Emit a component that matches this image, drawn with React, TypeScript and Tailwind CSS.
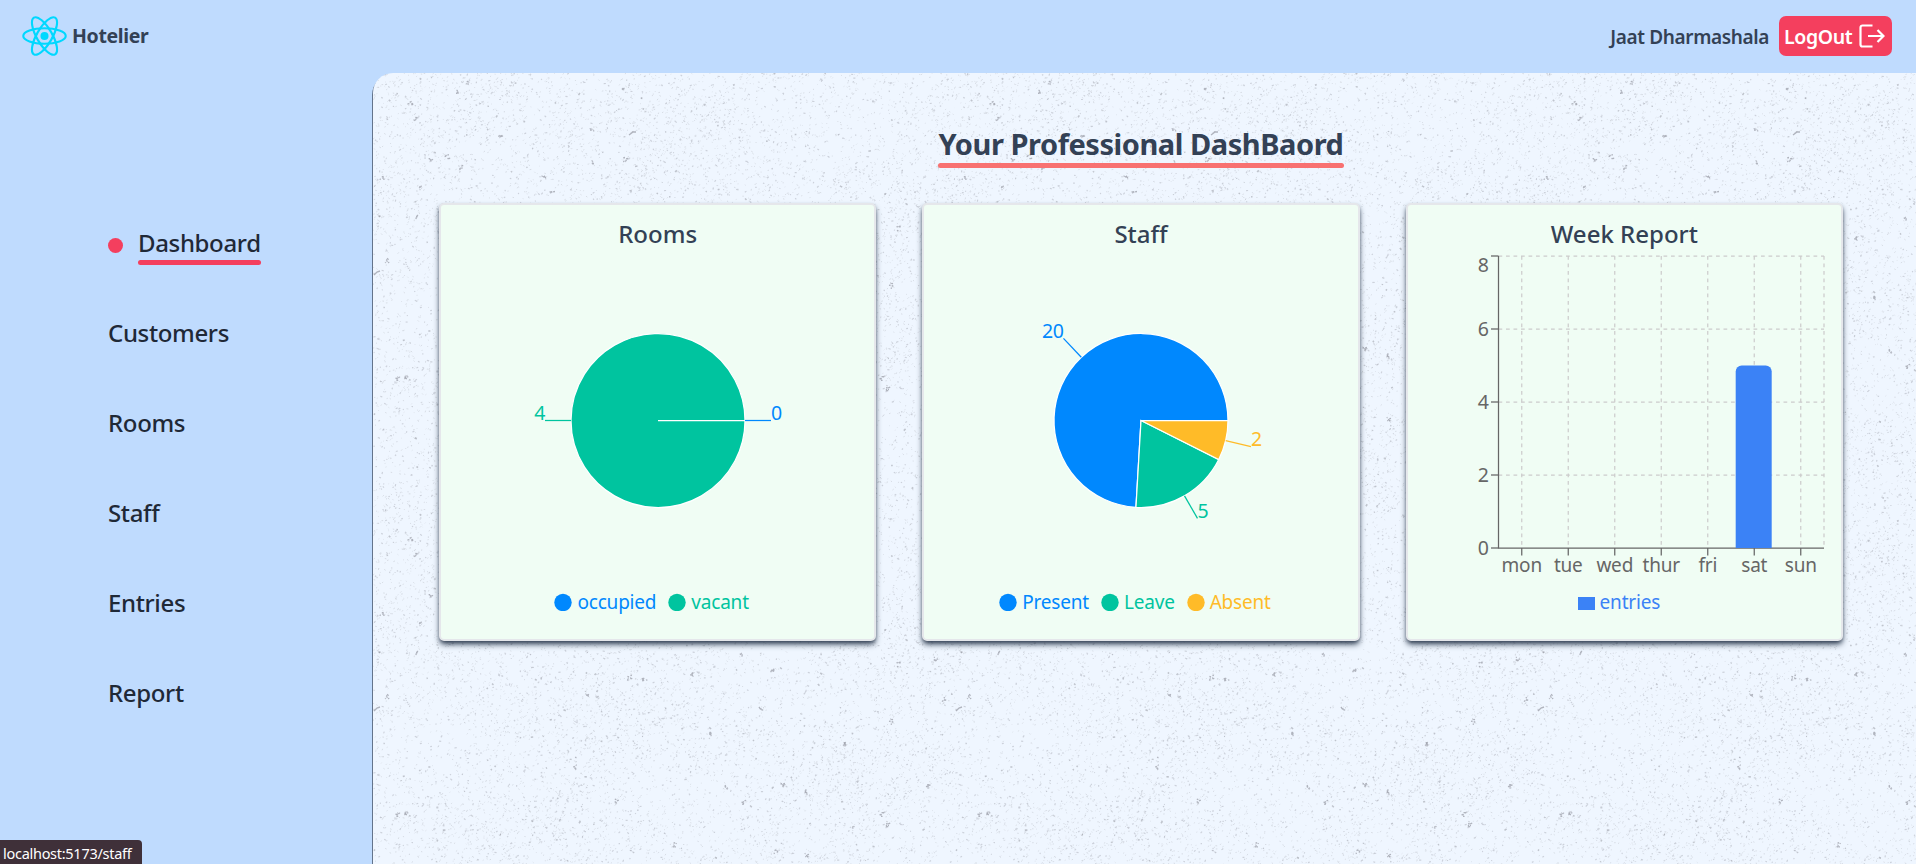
import React from "react";

const FONT = "font-['Noto_Sans','Open_Sans',sans-serif]";
const TILE_W = 582;
const TILE_H = 436;

function random(seed: number) {
  let s = seed;
  return () => {
    s = (s * 1664525 + 1013904223) % 4294967296;
    return s / 4294967296;
  };
}

// Builds one path of short random strokes over the tile, denser in some areas.
function specks(seed: number, count: number, min: number, max: number) {
  const r = random(seed);
  let d = "";
  for (let i = 0; i < count; i++) {
    const x = r() * TILE_W;
    const y = r() * TILE_H;
    const u = (x / TILE_W) * Math.PI * 2;
    const v = (y / TILE_H) * Math.PI * 2;
    const density = 0.62 + 0.12 * Math.sin(2 * u + v) + 0.1 * Math.cos(3 * v - u) + 0.08 * Math.sin(5 * u + 4 * v);
    const len = min + r() * (max - min);
    const a = -0.9 + r() * 2.4;
    if (r() > density) continue;
    d += `M${x.toFixed(1)} ${y.toFixed(1)}l${(Math.cos(a) * len).toFixed(1)} ${(-Math.sin(a) * len).toFixed(1)}`;
  }
  return d;
}

const GRAINS = [
  [43, 46], [127, 64], [219, 58], [251, 16], [252, 87], [48, 115], [14, 188], [171, 105], [87, 95], [74, 84],
  [220, 90], [179, 119], [95, 11], [85, 19], [43, 144], [9, 106], [37, 30], [58, 87], [215, 186], [369, 146],
  [256, 169], [270, 171], [319, 166], [399, 162], [387, 199], [337, 225], [471, 236], [518, 213], [526, 156],
  [563, 150], [571, 191], [24, 306], [515, 317], [509, 306], [371, 294], [354, 278], [302, 336], [403, 343],
  [433, 347], [202, 258], [244, 292], [432, 283], [409, 276], [555, 277], [33, 304],
];

function grains() {
  const r = random(5);
  let d = "M1 202l3 -3l3 -1M256 62l4 -3l3 0";
  for (const [x, y] of GRAINS) {
    for (let i = 0; i < 5; i++) {
      d += `M${(x - 2.5 + r() * 4).toFixed(1)} ${(y - 2.5 + r() * 4.5).toFixed(1)}l${(0.6 + r() * 1.4).toFixed(1)} ${(-1 + r() * 1.6).toFixed(1)}`;
    }
  }
  return d;
}

const FINE = specks(7, 16000, 0.6, 1.8);
const MEDIUM = specks(21, 3600, 0.8, 2.3);
const COARSE = specks(93, 240, 1, 2.6);
const CLUSTERS = grains();

function Texture() {
  return (
    <svg className="absolute inset-0 size-full" aria-hidden="true">
      <defs>
        <pattern id="speckle" width={TILE_W} height={TILE_H} patternUnits="userSpaceOnUse">
          <g fill="none" stroke="#64646e">
            <path d={FINE} strokeWidth="0.9" strokeOpacity="0.2" />
            <path d={MEDIUM} strokeWidth="1.2" strokeOpacity="0.25" />
            <path d={COARSE} strokeWidth="1.6" strokeOpacity="0.34" />
            <path d={CLUSTERS} strokeWidth="1.4" strokeOpacity="0.45" />
          </g>
        </pattern>
      </defs>
      <rect width="100%" height="100%" fill="url(#speckle)" />
    </svg>
  );
}

function ReactLogo() {
  return (
    <svg className="h-10 w-[45px]" viewBox="0 0 256 228" fill="#00D8FF">
      <g fill="none" stroke="#00D8FF" strokeWidth="12">
        <ellipse cx="128" cy="114" rx="121" ry="44" />
        <ellipse cx="128" cy="114" rx="121" ry="44" transform="rotate(60 128 114)" />
        <ellipse cx="128" cy="114" rx="121" ry="44" transform="rotate(120 128 114)" />
      </g>
      <circle cx="128" cy="114" r="23" />
    </svg>
  );
}

const LINKS = ["Dashboard", "Customers", "Rooms", "Staff", "Entries", "Report"];

function Sidebar() {
  return (
    <nav className="w-[373px] shrink-0 pl-[108px] pt-[153px]">
      <ul className="flex flex-col gap-[50px] text-2xl font-medium tracking-[-0.35px] text-[#1f2937]">
        {LINKS.map((name, i) => (
          <li key={name} className="flex h-10 items-start">
            {i === 0 && <span className="mr-[15px] mt-[12px] size-[15px] rounded-full bg-[#f43f5e]" />}
            <a className={i === 0 ? "flex flex-col" : ""}>
              <span className="block leading-[34px]">{name}</span>
              {i === 0 && <span className="h-[5px] rounded-full bg-[#f43f5e]" />}
            </a>
          </li>
        ))}
      </ul>
    </nav>
  );
}

function Card({ title, children }: { title: string; children: React.ReactNode }) {
  return (
    <section className="flex h-[438px] w-[437.3px] flex-col items-center rounded-[5px] border-2 border-[#e5e7eb] bg-[#f0fdf4] pt-[11px] shadow-[0_4px_6px_-1px_#334155,0_2px_4px_-2px_#334155]">
      <h2 className="mb-px text-2xl font-medium leading-9 text-[#334155]">{title}</h2>
      {children}
    </section>
  );
}

type Slice = { name: string; value: number; color: string };

function PieCard({ title, slices }: { title: string; slices: Slice[] }) {
  const cx = 217;
  const cy = 167.5;
  const r = 87;
  const total = slices.reduce((sum, s) => sum + s.value, 0);
  const at = (deg: number, radius: number) => [
    cx + Math.cos((deg * Math.PI) / 180) * radius,
    cy - Math.sin((deg * Math.PI) / 180) * radius,
  ];
  let angle = 0;
  const arcs = slices.map((s) => {
    const sweep = (s.value / total) * 360;
    const start = angle;
    angle += sweep;
    const end = Math.min(angle, start + 359.99);
    const [x1, y1] = at(start, r);
    const [x2, y2] = at(end, r);
    const [lx1, ly1] = at(start + sweep / 2, r);
    const [lx2, ly2] = at(start + sweep / 2, r + 26);
    return { ...s, lx1, ly1, lx2, ly2, d: `M${cx} ${cy}L${x1} ${y1}A${r} ${r} 0 ${sweep > 180 ? 1 : 0} 0 ${x2} ${y2}Z` };
  });
  return (
    <Card title={title}>
      <svg className="h-[334px] w-[434px] shrink-0" viewBox="0 0 434 334">
        {arcs.map((a) => (
          <path key={a.name} d={a.d} fill={a.color} stroke="#fff" strokeWidth="1.25" />
        ))}
        {arcs.map((a) => (
          <g key={a.name}>
            <path d={`M${a.lx1} ${a.ly1}L${a.lx2} ${a.ly2}`} stroke={a.color} strokeWidth="1.25" />
            <text
              x={a.lx2}
              y={a.ly2 - 0.5}
              fill={a.color}
              fontSize="19.5"
              letterSpacing="-0.4"
              textAnchor={a.lx2 > cx ? "start" : "end"}
            >
              {a.value}
            </text>
          </g>
        ))}
      </svg>
      <ul className="flex gap-3 pr-3 pt-[3px] text-[19px] leading-6 tracking-[-0.2px]">
        {slices.map((s) => (
          <li key={s.name} className="flex items-center gap-[5px]">
            <svg className="size-[18px]" viewBox="0 0 18 18">
              <circle cx="9" cy="9.5" r="8.7" fill={s.color} />
            </svg>
            <span style={{ color: s.color }}>{s.name}</span>
          </li>
        ))}
      </ul>
    </Card>
  );
}

const DAYS = ["mon", "tue", "wed", "thur", "fri", "sat", "sun"];

function WeekCard() {
  const left = 91.5;
  const right = 417;
  const top = 3;
  const bottom = 295;
  const step = (right - left) / DAYS.length;
  return (
    <Card title="Week Report">
      <svg className="h-[334px] w-[434px] shrink-0 overflow-visible" viewBox="0 0 434 334">
        <g stroke="#ccc" strokeWidth="1.25" strokeDasharray="3.75 3.75">
          {[0, 1, 2, 3].map((i) => (
            <path key={i} d={`M${left} ${top + i * 73}H${right}`} />
          ))}
          {DAYS.map((d, i) => (
            <path key={d} d={`M${left + step * (i + 0.5)} ${top}V${bottom}`} />
          ))}
          <path d={`M${right} ${top}V${bottom}`} />
        </g>
        <g stroke="#666" strokeWidth="1.25" fill="none">
          <path d={`M${left} ${top}V${bottom}H${right}`} />
          {[0, 1, 2, 3, 4].map((i) => (
            <path key={i} d={`M${left - 7.5} ${top + i * 73}h7.5`} />
          ))}
          {DAYS.map((d, i) => (
            <path key={d} d={`M${left + step * (i + 0.5)} ${bottom}v7.5`} />
          ))}
        </g>
        <path d={`M328.700 ${bottom}V118.500a6 6 0 0 1 6 -6h24a6 6 0 0 1 6 6V${bottom}Z`} fill="#3b82f6" />
        <g fill="#666">
          {[8, 6, 4, 2, 0].map((n, i) => (
            <text key={n} x="82" y={top + i * 73 + (i === 0 ? 16 : 7)} fontSize="19.5" textAnchor="end">
              {n}
            </text>
          ))}
          {DAYS.map((d, i) => (
            <text key={d} x={left + step * (i + 0.5)} y="319" fontSize="19" letterSpacing="-0.2" textAnchor="middle">
              {d}
            </text>
          ))}
        </g>
      </svg>
      <div className="flex items-center gap-[5px] pr-[11px] pt-[3px] text-[19px] leading-6 tracking-[-0.2px] text-[#3b82f6]">
        <span className="mt-0.5 h-[13px] w-[17px] bg-[#3b82f6]" />
        entries
      </div>
    </Card>
  );
}

export default function App() {
  return (
    <div className={`flex h-screen flex-col overflow-hidden bg-[#bfdbfe] ${FONT}`}>
      <header className="z-10 flex h-[73px] shrink-0 items-center justify-between bg-[#bfdbfe] pb-px pl-[22px] pr-6">
        <div className="flex items-center gap-[5px]">
          <ReactLogo />
          <span className="text-[19.5px] font-bold tracking-[-0.35px] text-[#334155]">Hotelier</span>
        </div>
        <div className="flex items-center gap-2.5">
          <span className="mt-0.5 text-[19px] font-semibold tracking-[-0.37px] text-[#334155]">Jaat Dharmashala</span>
          <button className="flex h-10 w-[113px] items-center justify-between rounded-[7px] bg-[#f43f5e] pl-[5px] pr-[7px] text-[19.5px] font-semibold text-white">
            <span className="mt-0.5 tracking-[-0.4px]">LogOut</span>
            <svg className="h-6 w-[26px]" viewBox="0 0 26 24" fill="none" stroke="#fff" strokeWidth="2.2">
              <path d="M13.500 1.500H3.500a2 2 0 0 0-2 2v17a2 2 0 0 0 2 2H13.500M9 12H24.500M18.500 6l6 6-6 6" />
            </svg>
          </button>
        </div>
      </header>
      <div className="flex min-h-0 grow">
        <Sidebar />
        <main className="relative grow rounded-tl-[20px] bg-[#eff6ff] shadow-[-1px_2px_0.5px_0_#64748b]">
          <div className="absolute inset-0 overflow-hidden rounded-tl-[20px]">
            <Texture />
          </div>
          <div className="relative flex flex-col items-center pt-[50px]">
            <div className="flex flex-col items-center pr-[7px]">
              <h1 className="-mb-0.5 text-[29px] font-bold leading-[42px] tracking-[-0.45px] text-[#334155]">
                Your Professional DashBaord
              </h1>
              <span className="h-[5px] w-[406px] rounded-full bg-[#f87171]" />
            </div>
            <div className="mt-[35px] flex w-full justify-between pl-[66px] pr-[73px]">
              <PieCard
                title="Rooms"
                slices={[
                  { name: "occupied", value: 0, color: "#0088FE" },
                  { name: "vacant", value: 4, color: "#00C49F" },
                ]}
              />
              <PieCard
                title="Staff"
                slices={[
                  { name: "Present", value: 20, color: "#0088FE" },
                  { name: "Leave", value: 5, color: "#00C49F" },
                  { name: "Absent", value: 2, color: "#FFBB28" },
                ]}
              />
              <WeekCard />
            </div>
          </div>
        </main>
      </div>
      <div className="fixed bottom-0 left-0 z-20 h-6 w-[142px] rounded-tr bg-[#3f3039] pl-[3px] text-[14.500px] leading-[26px] tracking-[-0.28px] text-white">
        localhost:5173/staff
      </div>
    </div>
  );
}
